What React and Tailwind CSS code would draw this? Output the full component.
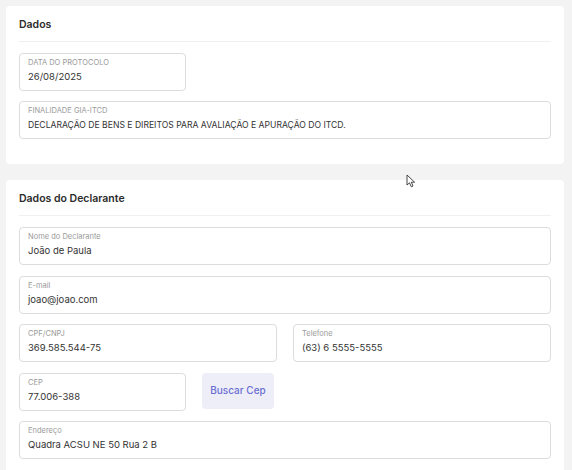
function Field({ label, value, className = '', upper, valueClass = 'text-[9.5px]' }) {
  return (
    <div className={`rounded-[4px] border border-[#dcdcdc] bg-white px-2 pt-[4px] h-[38px] ${className}`}>
      <div className={`text-[7.5px] leading-[10px] text-[#9a9a9a] ${upper ? 'uppercase' : ''}`}>{label}</div>
      <div className={`mt-[2px] leading-[14px] text-[#333] ${valueClass}`}>{value}</div>
    </div>
  );
}

function Card({ title, children, className = '' }) {
  return (
    <div className={`bg-white rounded-[4px] px-[13px] ${className}`}>
      <div className="pt-[12px] pb-[9px] text-[10.5px] leading-[14px] font-semibold text-[#2b2b2b]">{title}</div>
      <div className="border-t border-[#f0f0f0]" />
      {children}
    </div>
  );
}

export default function App() {
  return (
    <div className="relative w-[572px] h-[470px] overflow-hidden bg-[#f3f3f4] pt-[6px] pl-[6px] pr-[8px]" style={{ fontFamily: 'Inter, "Noto Sans", sans-serif' }}>
      <Card title="Dados" className="pb-[25px]">
        <div className="pt-[11px] flex flex-col gap-[10px]">
          <Field label="Data do Protocolo" value="26/08/2025" upper className="w-[167px]" />
          <Field label="Finalidade GIA-ITCD" value="DECLARAÇÃO DE BENS E DIREITOS PARA AVALIAÇÃO E APURAÇÃO DO ITCD." upper valueClass="text-[8.6px]" />
        </div>
      </Card>
      <Card title="Dados do Declarante" className="mt-[16px] pb-[20px]">
        <div className="pt-[11px] flex flex-col gap-[10.5px]">
          <Field label="Nome do Declarante" value="João de Paula" />
          <Field label="E-mail" value="joao@joao.com" />
          <div className="grid grid-cols-2 gap-[16px]">
            <Field label="CPF/CNPJ" value="369.585.544-75" />
            <Field label="Telefone" value="(63) 6 5555-5555" />
          </div>
          <div className="flex gap-[16px]">
            <Field label="CEP" value="77.006-388" className="w-[167px]" />
            <button className="w-[72px] h-[36px] rounded-[4px] bg-[#eeeef9] text-[10px] text-[#6b6fd0] font-medium">Buscar Cep</button>
          </div>
          <Field label="Endereço" value="Quadra ACSU NE 50 Rua 2 B" />
          <div className="flex gap-[16px]">
            <div className="w-[150px] h-[38px] rounded-[4px] border border-[#dcdcdc]" />
            <div className="w-[193px] h-[38px] rounded-[4px] border border-[#dcdcdc]" />
            <div className="w-[109px] h-[38px] rounded-[4px] border border-[#dcdcdc]" />
          </div>
        </div>
      </Card>
      <svg className="absolute left-[406px] top-[174px]" width="10" height="14" viewBox="0 0 10 14">
        <path d="M1 1 L1 11 L3.5 8.8 L5.3 12.8 L7 12 L5.3 8.2 L8.6 8.2 Z" fill="white" stroke="#333" strokeWidth="0.9" strokeLinejoin="round" />
      </svg>
    </div>
  );
}
